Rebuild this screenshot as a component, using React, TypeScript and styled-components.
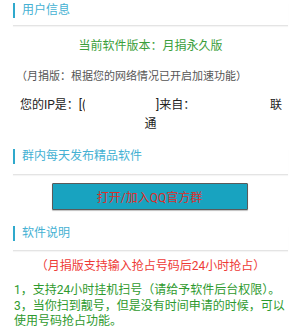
import React from 'react';
import styled, { createGlobalStyle } from 'styled-components';

const GlobalStyle = createGlobalStyle`
  body {
    margin: 0;
    background: #ffffff;
    font-family: Roboto, "Noto Sans CJK SC", sans-serif;
  }
`;

const Page = styled.div`
  width: 291px;
  padding: 3px 3px 0 13px;
  box-sizing: border-box;
`;

const SectionHeader = styled.div<{ $gap: number }>`
  display: flex;
  align-items: center;
  gap: 7px;
  padding-bottom: ${({ $gap }) => $gap}px;
  border-bottom: 1px solid #e4e4e4;
  box-shadow: 0 1px 1px rgba(0, 0, 0, 0.04);
`;

const Bar = styled.span`
  width: 2px;
  height: 15px;
  background-color: #2fa9cc;
`;

const HeaderTitle = styled.span`
  font-size: 12px;
  line-height: 15px;
  color: #45b1d3;
`;

const CenterText = styled.div<{ $color: string; $top: number }>`
  margin-top: ${({ $top }) => $top}px;
  text-align: center;
  font-size: 12px;
  line-height: 16px;
  color: ${({ $color }) => $color};
`;

const Note = styled.div`
  margin-top: 15px;
  padding-left: 3px;
  font-size: 11px;
  line-height: 16px;
  color: #555555;
`;

const IpRow = styled.div`
  margin-top: 12px;
  padding: 0 6px 0 7px;
  display: flex;
  font-size: 12px;
  line-height: 17px;
  color: #222222;
`;

const Clipped = styled.span`
  display: inline-block;
  width: 3px;
  overflow: hidden;
  vertical-align: top;
`;

const Redacted = styled.span`
  display: inline-block;
  width: 71px;
`;

const PushRight = styled.span`
  margin-left: auto;
`;

const Wrapped = styled.div`
  padding-top: 2px;
  text-align: center;
  font-size: 12px;
  line-height: 17px;
  color: #222222;
  margin-bottom: 16px;
`;

const ButtonRow = styled.div`
  display: flex;
  justify-content: center;
  padding: 8px 26px 16px 24px;
`;

const JoinButton = styled.button`
  width: 196px;
  height: 27px;
  background-color: #18a3c0;
  border: 1px solid #5a5a5a;
  border-radius: 1px;
  box-shadow: 0 1px 1px rgba(0, 0, 0, 0.25);
  color: #dc2f2b;
  font-family: Roboto, "Noto Sans CJK SC", sans-serif;
  font-size: 12px;
  padding: 0;
`;

const Lines = styled.div`
  margin-top: 9px;
  padding-left: 1px;
  font-size: 12px;
  line-height: 15.5px;
  color: #2e9a2e;
`;

export default function App() {
  return (
    <Page>
      <GlobalStyle />
      <SectionHeader $gap={7}>
        <Bar />
        <HeaderTitle>用户信息</HeaderTitle>
      </SectionHeader>
      <CenterText $color="#3a9e3a" $top={12}>当前软件版本：月捐永久版</CenterText>
      <Note>（月捐版：根据您的网络情况已开启加速功能）</Note>
      <IpRow>
        <span>
          您的IP是：[<Clipped>(</Clipped>
          <Redacted />
        </span>
        <span>]来自：</span>
        <PushRight>联</PushRight>
      </IpRow>
      <Wrapped>通</Wrapped>

      <SectionHeader $gap={10}>
        <Bar />
        <HeaderTitle>群内每天发布精品软件</HeaderTitle>
      </SectionHeader>
      <ButtonRow>
        <JoinButton>打开/加入QQ官方群</JoinButton>
      </ButtonRow>

      <SectionHeader $gap={9}>
        <Bar />
        <HeaderTitle>软件说明</HeaderTitle>
      </SectionHeader>
      <CenterText $color="#ee3a36" $top={7}>（月捐版支持输入抢占号码后24小时抢占）</CenterText>
      <Lines>
        1，支持24小时挂机扫号（请给予软件后台权限）。
        <br />
        3，当你扫到靓号，但是没有时间申请的时候，可以使用号码抢占功能。
      </Lines>
    </Page>
  );
}
